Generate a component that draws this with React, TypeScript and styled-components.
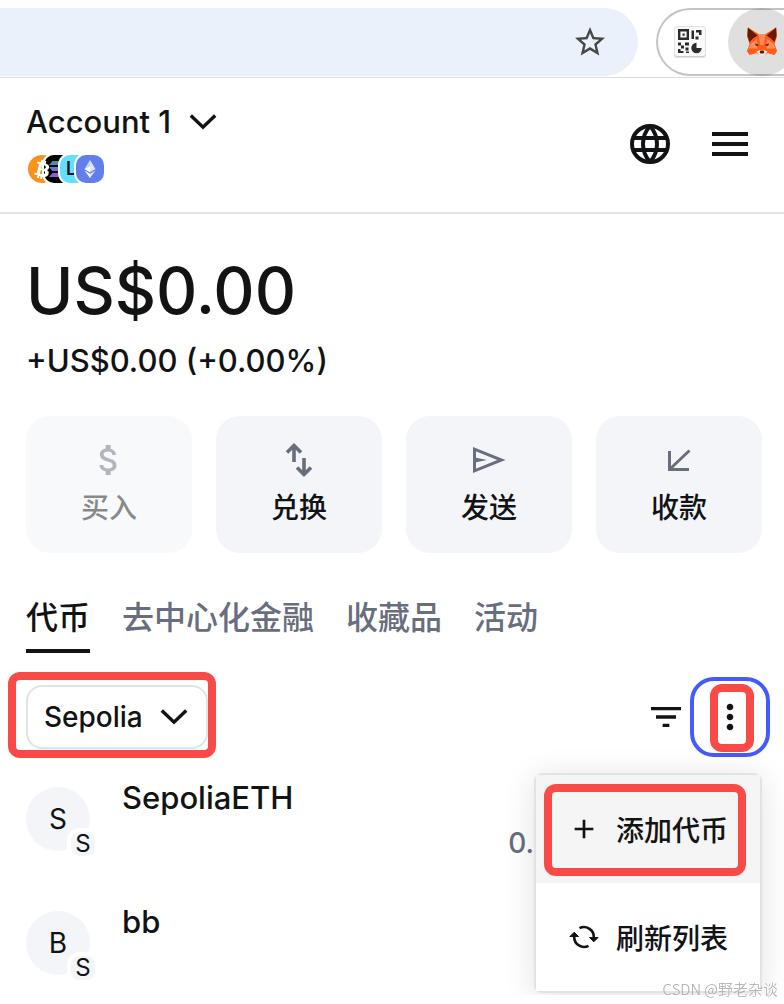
import React from 'react';
import styled, { createGlobalStyle, css } from 'styled-components';
import { MdAdd, MdAttachMoney, MdFilterList, MdMenu, MdMoreVert, MdStarBorder } from 'react-icons/md';
import { FaBtc } from 'react-icons/fa';

const ink = '#121314';
const muted = '#686e7d';
const line = '#e2e3e9';
const soft = '#f3f5f9';
const red = '#f84b48';

const GlobalStyle = createGlobalStyle`
  * { box-sizing: border-box; }
  body {
    margin: 0;
    background: #fff;
    color: ${ink};
    font-family: Inter, "Noto Sans CJK SC", sans-serif;
    font-size: 28px;
    font-weight: 500;
  }
  button, input, select {
    font: inherit;
    color: inherit;
    background: none;
    border: 0;
    margin: 0;
    padding: 0;
  }
  button { cursor: pointer; }
  svg { display: block; flex: none; }
`;

const Toolbar = styled.div`
  display: flex;
  gap: 18px;
  padding: 8px 0 1px;
  border-bottom: 1px solid #dcdcde;
  overflow: hidden;
`;

const AddressBar = styled.div`
  flex: 1;
  display: flex;
  align-items: center;
  height: 68px;
  padding-right: 30px;
  background: #eaf1fa;
  border-radius: 0 34px 34px 0;
  color: #474747;
`;

const AddressInput = styled.input`
  flex: 1;
  min-width: 0;
  height: 100%;
  outline: 0;
`;

const Extensions = styled.div`
  display: flex;
  align-items: center;
  gap: 22px;
  width: 128px;
  height: 68px;
  padding-left: 16px;
  border: 2px solid #c4c4c4;
  border-right: 0;
  border-radius: 34px 0 0 34px;
`;

const QrButton = styled.button`
  flex: none;
  display: grid;
  place-items: center;
  width: 32px;
  height: 32px;
  border-radius: 4px;
  background: #fafafa;
  box-shadow: 0 0 0 1px #e2e2e2 inset, 0 -2px 0 #ccc inset;
`;

const FoxButton = styled.button`
  flex: none;
  display: grid;
  place-items: center;
  width: 68px;
  height: 68px;
  border-radius: 50%;
  background: rgba(0, 0, 0, 0.125);
`;

const Header = styled.header`
  display: flex;
  align-items: center;
  justify-content: space-between;
  padding: 25px 30px 27px 26px;
  border-bottom: 2px solid ${line};
`;

const Account = styled.div`
  display: flex;
  flex-direction: column;
  gap: 12px;
`;

const AccountButton = styled.button`
  display: flex;
  align-items: center;
  gap: 18px;
  font-size: 31px;
  line-height: 38px;
`;

const Networks = styled.div`
  display: flex;
`;

const Network = styled.span<{ $fill: string; $round?: boolean }>`
  display: grid;
  place-items: center;
  width: 32px;
  height: 32px;
  border: 2px solid transparent;
  border-radius: ${p => (p.$round ? '50%' : '12px')};
  background: linear-gradient(${p => p.$fill}, ${p => p.$fill}) padding-box, #fff border-box;
  color: #fff;
  & + & { margin-left: -16px; }
`;

const TiltedCoin = styled(FaBtc)`
  transform: rotate(14deg);
`;

const NetworkLetter = styled.span`
  justify-self: start;
  padding-left: 6px;
  color: ${ink};
  font-size: 18px;
  font-weight: 600;
  line-height: 28px;
`;

const HeaderActions = styled.div`
  display: flex;
  align-items: center;
  gap: 36px;
`;

const Main = styled.main`
  padding: 37px 22px 0 26px;
`;

const Balance = styled.h1`
  margin: 0;
  font-size: 64px;
  font-weight: 500;
  line-height: 80px;
`;

const Change = styled.p`
  margin: 10px 0 35px;
  font-size: 31px;
  line-height: 40px;
`;

const Actions = styled.div`
  display: grid;
  grid-template-columns: repeat(4, 1fr);
  gap: 24px;
`;

const Action = styled.button`
  display: flex;
  flex-direction: column;
  align-items: center;
  gap: 8px;
  padding: 24px 0 25px;
  border-radius: 24px;
  background: ${soft};
  line-height: 40px;
  svg { color: ${muted}; }
  &:disabled { opacity: 0.5; cursor: default; }
`;

const Tabs = styled.div`
  display: flex;
  gap: 32px;
  margin: 45px 0 24px;
`;

const Tab = styled.button<{ $active?: boolean }>`
  padding-bottom: 11px;
  border-bottom: 4px solid transparent;
  color: ${muted};
  font-size: 32px;
  line-height: 40px;
  ${p => p.$active && css`color: ${ink}; border-color: ${ink};`}
`;

const Controls = styled.div`
  position: relative;
  display: flex;
  align-items: center;
  justify-content: space-between;
  height: 80px;
`;

const NetworkPicker = styled.div`
  position: relative;
  display: flex;
  svg {
    position: absolute;
    right: 20px;
    top: 24px;
    pointer-events: none;
  }
`;

const NetworkSelect = styled.select`
  appearance: none;
  height: 64px;
  padding: 0 63px 0 16px;
  border: 2px solid ${line};
  border-radius: 16px;
`;

const Tools = styled.div`
  display: flex;
  align-items: center;
  gap: 8px;
  margin-right: -4px;
`;

const ToolButton = styled.button<{ $focused?: boolean }>`
  position: relative;
  display: grid;
  place-items: center;
  width: ${p => (p.$focused ? 72 : 40)}px;
  height: 72px;
  border-radius: 20px;
  outline: ${p => (p.$focused ? '4px solid #4459ff' : '0')};
`;

const Highlight = styled.span<{ $inset: string }>`
  position: absolute;
  inset: ${p => p.$inset};
  border: 8px solid ${red};
  border-radius: 12px;
  pointer-events: none;
`;

const Menu = styled.div`
  position: absolute;
  z-index: 1;
  top: 96px;
  right: 0;
  width: 228px;
  border: 2px solid ${line};
  border-radius: 8px;
  background: #fff;
  box-shadow: 0 4px 32px rgba(0, 0, 0, 0.12);
`;

const MenuItem = styled.button<{ $hover?: boolean }>`
  position: relative;
  display: flex;
  align-items: center;
  gap: 16px;
  width: 100%;
  height: 108px;
  padding-left: 32px;
  background: ${p => (p.$hover ? '#f5f5f5' : '#fff')};
`;

const TokenList = styled.ul`
  list-style: none;
  margin: 0;
  padding: 0;
`;

const TokenRow = styled.li`
  display: flex;
  align-items: flex-start;
  gap: 32px;
  padding: 21px 0 18px;
  &:last-child { padding-bottom: 8px; }
`;

const TokenIcon = styled.div`
  position: relative;
  display: grid;
  place-items: center;
  width: 64px;
  height: 64px;
  margin-top: 9px;
  border-radius: 50%;
  background: ${soft};
  font-weight: 400;
`;

const TokenBadge = styled.span`
  position: absolute;
  right: -9px;
  bottom: -9px;
  width: 32px;
  height: 32px;
  border: 4px solid #fff;
  border-radius: 12px;
  background: ${soft};
  font-size: 24px;
  line-height: 24px;
  text-align: center;
`;

const TokenText = styled.div`
  flex: 1;
  display: flex;
  flex-direction: column;
  gap: 5px;
  line-height: 40px;
`;

const TokenName = styled.span`
  font-size: 31px;
`;

const TokenAmount = styled.span`
  min-height: 40px;
  padding-right: 228px;
  color: ${muted};
  text-align: right;
`;

const Watermark = styled.div`
  position: fixed;
  z-index: 2;
  right: 6px;
  bottom: 4px;
  color: #a8a8a8;
  font-size: 15px;
  font-weight: 300;
  line-height: 22px;
  font-family: "Noto Sans CJK SC", sans-serif;
`;

const Chevron = () => (
  <svg width="28" height="16" viewBox="0 0 28 16" fill="none" stroke={ink} strokeWidth="3.4" aria-hidden="true">
    <path d="M1.8 1.5 14 13.2 26.2 1.5" />
  </svg>
);

const Qr = () => (
  <svg width="26" height="26" viewBox="0 0 26 26" fill="#2c2c2c" aria-hidden="true">
    <path fillRule="evenodd" d="M1 0h11v11H1zM3.400 2.400v6.200h6.200V2.400zM5.500 4.500h2.200v2.200H5.500z" />
    <path d="M14.500 1.500h2.500v8.500h-2.500zM19 1h5.500v5h-2.500V3.500H19zM18.500 7.500h3v3h-3zM1 13.500h3v3H1zM4 16.500h3v3H4zM8 13.500h4v3H8zM1 20h2.500v4H1zM3.500 22h3v2h-3zM8.500 18.500h3v3h-3zM9 22.500h3v1.500H9z" />
    <path d="M19.500 13.800v5.200h5.200A5.200 5.200 0 1 1 19.500 13.800z" />
  </svg>
);

const Fox = () => (
  <svg width="30" height="30" viewBox="0 0 30 30" aria-hidden="true">
    <path fill="#ff5c16" d="M1 0.500 11.500 7h7L29 .5l1 9-2.500 7.500L30 24l-2.500 4-7-2L18.500 28h-7l-2-2-7 2L0 24l2.500-7L0 9.500z" />
    <path fill="#661800" d="M.8.5 10.500 8.500 6 11.500 2.500 15 .5 8.500zM29.200.5 19.500 8.500l4.500 3 3.500 3.500 2-6.500z" />
    <path fill="#ff8d5d" d="M3 17.500 9.500 12 11 19l-1 3-8.500.5zM27 17.500 20.500 12 19 19l1 3 8.500.5zM11.500 7h7l-2 11h-3z" />
    <path fill="#ff5c16" d="M0 23.500 2 21.500h7.500l1 4-7.500 2zM30 23.500 28 21.500h-7.500l-1 4 7.500 2z" />
    <path fill="#e8e8ea" d="m9.500 24.500 3.500-1.500h4l3.500 1.500-2.500 4h-6z" />
    <path fill="#661800" d="M13.300 23.500h3.400l.6 2-1 1h-2.600l-1-1z" />
    <path fill="#661800" d="m8 16.500 3.500 1-.5 1.800-2.500-1zM22 16.500l-3.500 1 .5 1.800 2.500-1z" />
  </svg>
);

const Globe = () => (
  <svg width="40" height="40" viewBox="0 0 40 40" fill="none" stroke={ink} strokeWidth="4" aria-hidden="true">
    <circle cx="20" cy="20" r="18" />
    <path d="M3 14h34M3 26h34M20 2c-4.500 5-7 11-7 18s2.500 13 7 18c4.500-5 7-11 7-18S24.500 7 20 2z" />
  </svg>
);

const Solana = () => (
  <svg width="18" height="16" viewBox="0 0 18 16" aria-hidden="true">
    <path fill="#4a8fa8" d="M3.500 0H18l-3.500 4H0z" />
    <path fill="#6e78c9" d="M0 6h14.500L18 10H3.500z" />
    <path fill="#8b5be0" d="M3.500 12H18l-3.500 4H0z" />
  </svg>
);

const Ether = () => (
  <svg width="12" height="18" viewBox="0 0 12 18" aria-hidden="true">
    <path fill="#c7d1f8" d="M6 0v12.200L.5 9z" />
    <path fill="#fff" d="M.5 9 6 6.500v5.700zM.5 10.500 6 13.800V18z" />
    <path fill="#dde4fb" d="M6 0l5.500 9L6 12.200zM6 13.800l5.500-3.300L6 18z" />
  </svg>
);

const iconProps = {
  width: 40,
  height: 40,
  viewBox: '0 0 40 40',
  fill: 'none',
  stroke: 'currentColor',
  'aria-hidden': true,
} as const;

const Swap = () => (
  <svg {...iconProps} strokeWidth="3.6">
    <path d="M15 22V6M8 12.500l7-7 7 7M25 18v16M18 27.500l7 7 7-7" />
  </svg>
);

const Send = () => (
  <svg {...iconProps} strokeWidth="3">
    <path d="M5.500 9.200v21.600L32.500 20z" />
    <path d="M6 17.500 18 20 6 22.500z" fill="currentColor" stroke="none" />
  </svg>
);

const Receive = () => (
  <svg {...iconProps} strokeWidth="3">
    <path d="M10.500 11v18.500H30M11 29 30.500 10.500" />
  </svg>
);

const Refresh = () => (
  <svg width="32" height="32" viewBox="0 0 32 32" fill="none" stroke={ink} strokeWidth="2.600" aria-hidden="true">
    <path d="M11.500 7.200A9.800 9.800 0 0 1 25.800 16v3M20.500 24.800A9.800 9.800 0 0 1 6.200 16v-3" />
    <path d="M21.500 16.500h8.600l-4.300 4.300zM1.900 15.500h8.600l-4.300-4.300z" fill={ink} strokeWidth="1" />
  </svg>
);

const tokens = [
  { symbol: 'SepoliaETH', letter: 'S', amount: '0.' },
  { symbol: 'bb', letter: 'B', amount: '' },
];

export default function App() {
  return (
    <>
      <GlobalStyle />
      <Toolbar>
        <AddressBar>
          <AddressInput type="text" aria-label="地址栏" />
          <button aria-label="收藏"><MdStarBorder size={36} /></button>
        </AddressBar>
        <Extensions>
          <QrButton aria-label="二维码"><Qr /></QrButton>
          <FoxButton aria-label="MetaMask"><Fox /></FoxButton>
        </Extensions>
      </Toolbar>

      <Header>
        <Account>
          <AccountButton>Account 1 <Chevron /></AccountButton>
          <Networks>
            <Network $fill="#f7931a" $round><TiltedCoin size={19} /></Network>
            <Network $fill="#000000"><Solana /></Network>
            <Network $fill="#61dfff"><NetworkLetter>L</NetworkLetter></Network>
            <Network $fill="#627eea"><Ether /></Network>
          </Networks>
        </Account>
        <HeaderActions>
          <button aria-label="网络"><Globe /></button>
          <button aria-label="菜单"><MdMenu size={48} /></button>
        </HeaderActions>
      </Header>

      <Main>
        <Balance>US$0.00</Balance>
        <Change>+US$0.00 (+0.00%)</Change>

        <Actions>
          <Action disabled><MdAttachMoney size={40} />买入</Action>
          <Action><Swap />兑换</Action>
          <Action><Send />发送</Action>
          <Action><Receive />收款</Action>
        </Actions>

        <Tabs role="tablist">
          <Tab role="tab" aria-selected $active>代币</Tab>
          <Tab role="tab">去中心化金融</Tab>
          <Tab role="tab">收藏品</Tab>
          <Tab role="tab">活动</Tab>
        </Tabs>

        <Controls>
          <NetworkPicker>
            <NetworkSelect aria-label="选择网络" defaultValue="Sepolia">
              <option>Sepolia</option>
            </NetworkSelect>
            <Chevron />
            <Highlight $inset="-13px -8px -9px -18px" />
          </NetworkPicker>
          <Tools>
            <ToolButton aria-label="排序"><MdFilterList size={40} /></ToolButton>
            <ToolButton aria-label="更多" $focused>
              <MdMoreVert size={40} />
              <Highlight $inset="3px 12px 1px 16px" />
            </ToolButton>
          </Tools>
          <Menu role="menu">
            <MenuItem role="menuitem" $hover>
              <MdAdd size={32} />添加代币
              <Highlight $inset="9px 14px 7px 8px" />
            </MenuItem>
            <MenuItem role="menuitem"><Refresh />刷新列表</MenuItem>
          </Menu>
        </Controls>

        <TokenList>
          {tokens.map(token => (
            <TokenRow key={token.symbol}>
              <TokenIcon>
                {token.letter}
                <TokenBadge>S</TokenBadge>
              </TokenIcon>
              <TokenText>
                <TokenName>{token.symbol}</TokenName>
                <TokenAmount>{token.amount}</TokenAmount>
              </TokenText>
            </TokenRow>
          ))}
        </TokenList>
      </Main>
      <Watermark>CSDN @野老杂谈</Watermark>
    </>
  );
}
